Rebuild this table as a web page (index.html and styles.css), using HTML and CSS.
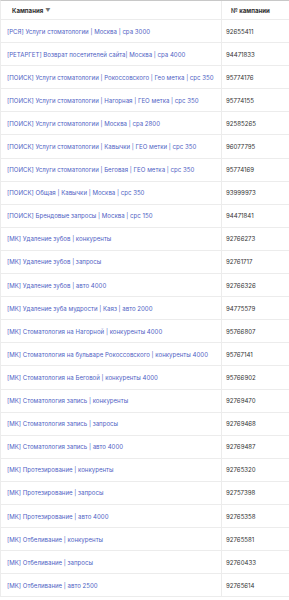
FILE: index.html
```html
<!DOCTYPE html>
<html lang="ru">
<head>
<meta charset="utf-8">
<link rel="stylesheet" href="styles.css">
</head>
<body>
<div class="table">
  <div class="row head">
    <div class="cell c1">Кампания <span class="arrow">▼</span></div>
    <div class="cell c2">№ кампании</div>
  </div>
  <div class="row"><div class="cell c1"><a>[РСЯ] Услуги стоматологии | Москва | cpa 3000</a></div><div class="cell c2">92655411</div></div>
  <div class="row"><div class="cell c1"><a>[РЕТАРГЕТ] Возврат посетителей сайта| Москва | cpa 4000</a></div><div class="cell c2">94471833</div></div>
  <div class="row"><div class="cell c1"><a>[ПОИСК] Услуги стоматологии | Рокоссовского | Гео метка | cpc 350</a></div><div class="cell c2">95774176</div></div>
  <div class="row"><div class="cell c1"><a>[ПОИСК] Услуги стоматологии | Нагорная | ГЕО метка | cpc 350</a></div><div class="cell c2">95774155</div></div>
  <div class="row"><div class="cell c1"><a>[ПОИСК] Услуги стоматологии | Москва | cpa 2800</a></div><div class="cell c2">92585265</div></div>
  <div class="row"><div class="cell c1"><a>[ПОИСК] Услуги стоматологии | Кавычки | ГЕО метки | cpc 350</a></div><div class="cell c2">96077795</div></div>
  <div class="row"><div class="cell c1"><a>[ПОИСК] Услуги стоматологии | Беговая | ГЕО метка | cpc 350</a></div><div class="cell c2">95774169</div></div>
  <div class="row"><div class="cell c1"><a>[ПОИСК] Общая | Кавычки | Москва | cpc 350</a></div><div class="cell c2">93999973</div></div>
  <div class="row"><div class="cell c1"><a>[ПОИСК] Брендовые запросы | Москва | cpc 150</a></div><div class="cell c2">94471841</div></div>
  <div class="row"><div class="cell c1"><a>[МК] Удаление зубов | конкуренты</a></div><div class="cell c2">92766273</div></div>
  <div class="row"><div class="cell c1"><a>[МК] Удаление зубов | запросы</a></div><div class="cell c2">92761717</div></div>
  <div class="row"><div class="cell c1"><a>[МК] Удаление зубов | авто 4000</a></div><div class="cell c2">92766326</div></div>
  <div class="row"><div class="cell c1"><a>[МК] Удаление зуба мудрости | Каяз | авто 2000</a></div><div class="cell c2">94775579</div></div>
  <div class="row"><div class="cell c1"><a>[МК] Стоматология на Нагорной | конкуренты 4000</a></div><div class="cell c2">95766807</div></div>
  <div class="row"><div class="cell c1"><a>[МК] Стоматология на бульваре Рокоссовского | конкуренты 4000</a></div><div class="cell c2">95767141</div></div>
  <div class="row"><div class="cell c1"><a>[МК] Стоматология на Беговой | конкуренты 4000</a></div><div class="cell c2">95766902</div></div>
  <div class="row"><div class="cell c1"><a>[МК] Стоматология запись | конкуренты</a></div><div class="cell c2">92769470</div></div>
  <div class="row"><div class="cell c1"><a>[МК] Стоматология запись | запросы</a></div><div class="cell c2">92769468</div></div>
  <div class="row"><div class="cell c1"><a>[МК] Стоматология запись | авто 4000</a></div><div class="cell c2">92769487</div></div>
  <div class="row"><div class="cell c1"><a>[МК] Протезирование | конкуренты</a></div><div class="cell c2">92765320</div></div>
  <div class="row"><div class="cell c1"><a>[МК] Протезирование | запросы</a></div><div class="cell c2">92757398</div></div>
  <div class="row"><div class="cell c1"><a>[МК] Протезирование | авто 4000</a></div><div class="cell c2">92765358</div></div>
  <div class="row"><div class="cell c1"><a>[МК] Отбеливание | конкуренты</a></div><div class="cell c2">92765581</div></div>
  <div class="row"><div class="cell c1"><a>[МК] Отбеливание | запросы</a></div><div class="cell c2">92760433</div></div>
  <div class="row"><div class="cell c1"><a>[МК] Отбеливание | авто 2500</a></div><div class="cell c2">92765614</div></div>
</div>
</body>
</html>
```
FILE: styles.css
```css
html, body {
  margin: 0;
  padding: 0;
  background: #ffffff;
}
body {
  font-family: "Inter", "Roboto", "Liberation Sans", sans-serif;
  font-size: 6.1px;
  color: #333333;
}
.table {
  width: 289px;
  border-top: 1px solid #c8c8c8;
  border-left: 1px solid #ececec;
  box-sizing: border-box;
}
.row {
  display: grid;
  grid-template-columns: 220px 1fr;
  height: 23.1px;
  border-bottom: 1px solid #ececec;
  box-sizing: border-box;
}
.cell {
  display: flex;
  align-items: center;
  padding-left: 6px;
  white-space: nowrap;
  overflow: hidden;
}
.c2 {
  border-left: 1px solid #ececec;
  padding-left: 4px;
}
.head {
  height: 19px;
  font-weight: 700;
  color: #333;
}
.head .c1 {
  padding-left: 11px;
}
.head .c2 {
  padding-left: 9px;
}
.arrow {
  font-size: 5px;
  color: #777;
  margin-left: 2px;
}
a {
  color: #4f62c4;
  text-decoration: none;
}
```
